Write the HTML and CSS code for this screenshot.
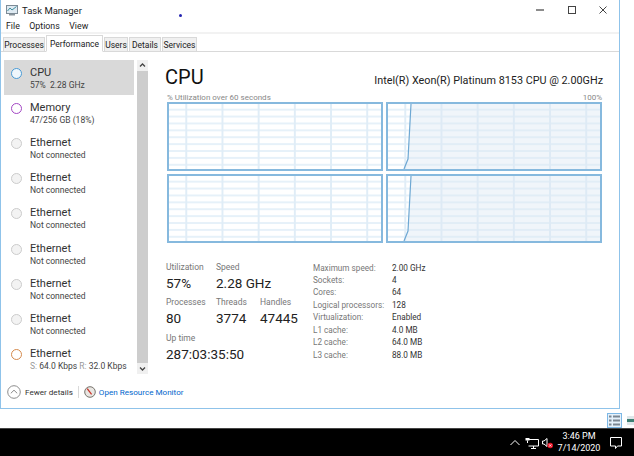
FILE: index.html
```html
<!DOCTYPE html>
<html lang="en">
<head>
  <meta charset="UTF-8">
  <title>Task Manager</title>
  <link rel="stylesheet" href="styles.css">
</head>
<body>
  <div class="window">
    <div class="titlebar">
      <svg class="app-icon" width="12" height="12" viewBox="0 0 12 12">
        <rect x="0.5" y="1.5" width="11" height="8" fill="#dfeaf2" stroke="#7d8b96"/>
        <path d="M1.5 7 L4 4 L6 6 L10.5 2.5" fill="none" stroke="#3f8f9f"/>
        <rect x="3" y="10" width="6" height="1.5" fill="#8a949c"/>
      </svg>
      <span class="app-name">Task Manager</span>
      <span class="cursor-dot"></span>
      <div class="win-btns">
        <svg width="10" height="10" viewBox="0 0 10 10"><rect x="1" y="4" width="8" height="2" fill="#8c8c8c"/></svg>
        <svg width="10" height="10" viewBox="0 0 10 10"><rect x="1.5" y="1.5" width="7" height="7" fill="none" stroke="#444"/></svg>
        <svg width="10" height="10" viewBox="0 0 10 10"><path d="M1.5 1.5 L8.5 8.5 M8.5 1.5 L1.5 8.5" stroke="#444"/></svg>
      </div>
    </div>
    <div class="menubar">
      <span>File</span>
      <span>Options</span>
      <span>View</span>
    </div>
    <div class="tabs">
      <div class="tab tab-processes">Processes</div>
      <div class="tab tab-active">Performance</div>
      <div class="tab tab-users">Users</div>
      <div class="tab tab-details">Details</div>
      <div class="tab tab-services">Services</div>
    </div>

    <div class="content">
      <div class="sidebar">
        <div class="items">
          <div class="item selected">
            <span class="dot dot-cpu"></span>
            <div><div class="item-name">CPU</div><div class="item-sub">57%&nbsp; 2.28 GHz</div></div>
          </div>
          <div class="item">
            <span class="dot dot-mem"></span>
            <div><div class="item-name">Memory</div><div class="item-sub">47/256 GB (18%)</div></div>
          </div>
          <div class="item">
            <span class="dot dot-off"></span>
            <div><div class="item-name">Ethernet</div><div class="item-sub">Not connected</div></div>
          </div>
          <div class="item">
            <span class="dot dot-off"></span>
            <div><div class="item-name">Ethernet</div><div class="item-sub">Not connected</div></div>
          </div>
          <div class="item">
            <span class="dot dot-off"></span>
            <div><div class="item-name">Ethernet</div><div class="item-sub">Not connected</div></div>
          </div>
          <div class="item">
            <span class="dot dot-off"></span>
            <div><div class="item-name">Ethernet</div><div class="item-sub">Not connected</div></div>
          </div>
          <div class="item">
            <span class="dot dot-off"></span>
            <div><div class="item-name">Ethernet</div><div class="item-sub">Not connected</div></div>
          </div>
          <div class="item">
            <span class="dot dot-off"></span>
            <div><div class="item-name">Ethernet</div><div class="item-sub">Not connected</div></div>
          </div>
          <div class="item">
            <span class="dot dot-eth"></span>
            <div><div class="item-name">Ethernet</div><div class="item-sub"><span class="dim">S:</span> 64.0 Kbps <span class="dim">R:</span> 32.0 Kbps</div></div>
          </div>
        </div>
        <div class="scrollbar">
          <svg class="arrow" width="11" height="11" viewBox="0 0 11 11"><path d="M3 6.5 L5.5 4 L8 6.5" fill="none" stroke="#444" stroke-width="1.3"/></svg>
          <div class="thumb"></div>
          <svg class="arrow" width="11" height="11" viewBox="0 0 11 11"><path d="M3 4.5 L5.5 7 L8 4.5" fill="none" stroke="#444" stroke-width="1.3"/></svg>
        </div>
      </div>

      <div class="main">
        <div class="main-head">
          <div class="main-title">CPU</div>
          <div class="cpu-model">Intel(R) Xeon(R) Platinum 8153 CPU @ 2.00GHz</div>
        </div>
        <div class="graph-label">
          <span>% Utilization over 60 seconds</span>
          <span>100%</span>
        </div>
        <div class="graphs">
          <div class="graph"></div>
          <div class="graph">
            <svg class="plot" viewBox="0 0 212 65" preserveAspectRatio="none">
              <path d="M16 65 L20 55 L23 0 L212 0 L212 65 Z" fill="#dbe6f3" fill-opacity="0.42"/>
              <path d="M16 65 L20 55 L23 0" fill="none" stroke="#6ea8d3" stroke-width="1.2"/>
            </svg>
          </div>
          <div class="graph"></div>
          <div class="graph">
            <svg class="plot" viewBox="0 0 212 65" preserveAspectRatio="none">
              <path d="M16 65 L20 55 L23 0 L212 0 L212 65 Z" fill="#dbe6f3" fill-opacity="0.42"/>
              <path d="M16 65 L20 55 L23 0" fill="none" stroke="#6ea8d3" stroke-width="1.2"/>
            </svg>
          </div>
        </div>

        <div class="stats">
          <div class="stats-left">
            <div class="stat-row">
              <div class="stat stat-a"><div class="stat-label">Utilization</div><div class="stat-value">57%</div></div>
              <div class="stat"><div class="stat-label">Speed</div><div class="stat-value">2.28 GHz</div></div>
            </div>
            <div class="stat-row">
              <div class="stat stat-a"><div class="stat-label">Processes</div><div class="stat-value">80</div></div>
              <div class="stat stat-b"><div class="stat-label">Threads</div><div class="stat-value">3774</div></div>
              <div class="stat"><div class="stat-label">Handles</div><div class="stat-value">47445</div></div>
            </div>
            <div class="stat-row">
              <div class="stat"><div class="stat-label">Up time</div><div class="stat-value">287:03:35:50</div></div>
            </div>
          </div>
          <div class="specs">
            <span class="spec-key">Maximum speed:</span><span>2.00 GHz</span>
            <span class="spec-key">Sockets:</span><span>4</span>
            <span class="spec-key">Cores:</span><span>64</span>
            <span class="spec-key">Logical processors:</span><span>128</span>
            <span class="spec-key">Virtualization:</span><span>Enabled</span>
            <span class="spec-key">L1 cache:</span><span>4.0 MB</span>
            <span class="spec-key">L2 cache:</span><span>64.0 MB</span>
            <span class="spec-key">L3 cache:</span><span>88.0 MB</span>
          </div>
        </div>
      </div>
    </div>

    <div class="footer">
      <svg width="14" height="14" viewBox="0 0 14 14">
        <circle cx="7" cy="7" r="6.3" fill="none" stroke="#8c8c8c"/>
        <path d="M3.8 8.3 L7 5.2 L10.2 8.3" fill="none" stroke="#8c8c8c"/>
      </svg>
      <span class="fewer">Fewer details</span>
      <span class="footer-sep"></span>
      <svg width="12" height="12" viewBox="0 0 12 12">
        <circle cx="6" cy="6" r="5.3" fill="#e8e6e2" stroke="#77736c"/>
        <path d="M3.2 2.6 L7.6 8.4" stroke="#c9352b" stroke-width="1.3"/>
      </svg>
      <span class="link">Open Resource Monitor</span>
    </div>
  </div>

  <div class="strip">
    <span class="view-btn view-on">
      <svg width="13" height="13" viewBox="0 0 13 13">
        <path d="M1 2.5 H3.5 M5 2.5 H12 M1 6.5 H3.5 M5 6.5 H12 M1 10.5 H3.5 M5 10.5 H12" stroke="#7b8793" stroke-width="2"/>
      </svg>
    </span>
    <span class="view-btn">
      <svg width="13" height="13" viewBox="0 0 13 13">
        <rect x="1" y="2" width="11" height="9" fill="#dfe6ea"/>
        <rect x="1" y="5" width="7" height="3" fill="#3d7f73"/>
      </svg>
    </span>
  </div>

  <div class="taskbar">
    <svg width="12" height="12" viewBox="0 0 12 12"><path d="M1.5 8 L6 3.5 L10.5 8" fill="none" stroke="#fff"/></svg>
    <svg class="tray-net" width="14" height="14" viewBox="0 0 14 14">
      <path d="M3.5 3.5 H13.5 V10 H3.5 M8.5 10 V12.5 M6 12.5 H11" fill="none" stroke="#fff"/>
      <rect x="0.5" y="2" width="4" height="2.5" fill="#fff"/>
      <path d="M2.5 4.5 V7" stroke="#fff"/>
    </svg>
    <span class="tray-sound">
      <svg width="13" height="14" viewBox="0 0 13 14">
        <path d="M2.5 5 H4 L7 2.5 V10.5 L4 8 H2.5 Z" fill="none" stroke="#fff"/>
        <circle cx="10.2" cy="9.5" r="2.8" fill="#e81123"/>
        <path d="M9 8.3 L11.4 10.7 M11.4 8.3 L9 10.7" stroke="#fff" stroke-width="0.8"/>
      </svg>
    </span>
    <div class="clock">
      <div>3:46 PM</div>
      <div>7/14/2020</div>
    </div>
    <svg class="notify" width="14" height="14" viewBox="0 0 14 14">
      <path d="M1.5 1.5 H12.5 V10 H8.5 L6.5 12.5 V10 H1.5 Z" fill="none" stroke="#fff"/>
    </svg>
  </div>
</body>
</html>
```

FILE: styles.css
```css
* {
  box-sizing: border-box;
}
html, body {
  margin: 0;
  padding: 0;
}
body {
  width: 634px;
  height: 456px;
  overflow: hidden;
  background: #fff;
  font-family: Roboto, "Noto Sans", sans-serif;
  color: #222;
  display: flex;
  flex-direction: column;
}

/* window frame */
.window {
  width: 620px;
  height: 409px;
  flex: none;
  border-left: 1px solid #8fc3ea;
  border-right: 1px solid #8fc3ea;
  border-bottom: 1px solid #8fc3ea;
  display: flex;
  flex-direction: column;
  position: relative;
}
.titlebar {
  height: 20px;
  display: flex;
  align-items: center;
  padding-left: 5px;
  font-size: 9.5px;
}
.app-icon {
  margin-right: 4px;
}
.cursor-dot {
  position: absolute;
  left: 178px;
  top: 14px;
  width: 3px;
  height: 3px;
  border-radius: 50%;
  background: #2323b0;
}
.win-btns {
  margin-left: auto;
  display: flex;
  gap: 21.5px;
  padding-right: 11px;
}
.menubar {
  height: 14px;
  display: flex;
  align-items: center;
  gap: 9.5px;
  padding-left: 5px;
  font-size: 8.8px;
  border-bottom: 2px solid #f2f2f2;
}
.tabs {
  height: 18px;
  display: flex;
  align-items: flex-end;
  padding-left: 2px;
  border-bottom: 1px solid #d9d9d9;
  font-size: 8.5px;
}
.tab {
  height: 15px;
  margin-bottom: -1px;
  background: #f0f0f0;
  border: 1px solid #d9d9d9;
  margin-right: 1px;
  display: flex;
  align-items: center;
  justify-content: center;
}
.tab-processes { width: 42px; }
.tab-active {
  width: 57px;
  height: 17px;
  background: #fff;
  border-bottom-color: #fff;
}
.tab-users { width: 24px; }
.tab-details { width: 32px; }
.tab-services { width: 35px; }

.content {
  flex: 1;
  display: flex;
  min-height: 0;
}

/* left list */
.sidebar {
  width: 147px;
  flex: none;
  display: flex;
  padding: 8px 0 0 3px;
}
.items {
  width: 130px;
}
.item {
  height: 35.2px;
  display: flex;
  align-items: center;
  gap: 8px;
  padding: 0 0 0 7px;
}
.selected {
  background: #d9d9d9;
}
.dot {
  width: 11px;
  height: 11px;
  flex: none;
  border-radius: 50%;
  border: 1.3px solid #ccc;
  background: #f3f3f3;
  margin-top: -9px;
}
.dot-cpu { border-color: #4a9ad4; background: #eef6fc; }
.dot-mem { border-color: #a346c4; background: #fff; }
.dot-eth { border-color: #d58a4c; background: #fff; }
.item-name {
  font-size: 11px;
  line-height: 14px;
  color: #333;
}
.item-sub {
  font-size: 8.5px;
  line-height: 10px;
  color: #444;
}
.dim {
  color: #999;
}
.scrollbar {
  width: 11px;
  margin-left: 3px;
  height: 314px;
  background: #f0f0f0;
  display: flex;
  flex-direction: column;
}
.thumb {
  flex: 1;
  background: #cdcdcd;
}
.arrow {
  flex: none;
}

/* right side */
.main {
  flex: 1;
  padding: 12px 17px 0 19px;
}
.main-head {
  display: flex;
  justify-content: space-between;
  align-items: flex-end;
  height: 26px;
}
.main-title {
  font-size: 20px;
  line-height: 26px;
  color: #111;
  margin-left: -2px;
}
.cpu-model {
  font-size: 10.8px;
  line-height: 19px;
  color: #222;
  margin-right: -1px;
}
.graph-label {
  display: flex;
  justify-content: space-between;
  font-size: 8px;
  line-height: 10px;
  color: #888;
  margin-top: 3px;
  height: 9px;
}
.graphs {
  display: grid;
  grid-template-columns: 216px 216px;
  grid-template-rows: 69px 69px;
  gap: 3px;
}
.graph {
  border: 2px solid #86b9de;
  position: relative;
  background-color: #fff;
  background-image:
    linear-gradient(to right, #e0edf7 1.5px, transparent 1.5px),
    linear-gradient(to bottom, #e6f1f9 1.5px, transparent 1.5px);
  background-size: 36.2px 100%, 100% 6.9px;
  background-position: 16.3px 0, 0 4.7px;
}
.plot {
  display: block;
  width: 100%;
  height: 100%;
}

.stats {
  display: flex;
  margin: 18.5px 0 0 -1px;
}
.stats-left {
  width: 147px;
  flex: none;
}
.stat-row {
  display: flex;
  height: 35.5px;
}
.stat-a {
  width: 50px;
}
.stat-b {
  width: 44px;
}
.stat-label {
  font-size: 8.5px;
  line-height: 11px;
  color: #777;
}
.stat-value {
  font-size: 13.5px;
  line-height: 20px;
  color: #222;
}
.specs {
  display: grid;
  grid-template-columns: 79px auto;
  grid-auto-rows: 12.45px;
  font-size: 8.2px;
  line-height: 12.45px;
  align-items: center;
  color: #333;
}
.spec-key {
  color: #777;
}

/* bottom bar of the window */
.footer {
  height: 34px;
  flex: none;
  display: flex;
  align-items: center;
  padding: 2px 0 0 6px;
  font-size: 8.1px;
}
.fewer {
  margin-left: 4px;
  color: #333;
}
.footer-sep {
  width: 1px;
  height: 12px;
  background: #d9d9d9;
  margin: 0 5px;
}
.link {
  margin-left: 3px;
  color: #0066cc;
}

.strip {
  height: 19px;
  flex: none;
  display: flex;
  justify-content: flex-end;
  align-items: flex-end;
  gap: 3px;
  margin-right: -6px;
}
.view-btn {
  width: 15px;
  height: 15px;
  display: flex;
  align-items: center;
  justify-content: center;
}
.view-on {
  background: #e5f1fb;
  border: 1px solid #7db8e6;
}

.taskbar {
  flex: 1;
  background: #000;
  border-top: 1px solid #444;
  color: #fff;
  display: flex;
  align-items: center;
  justify-content: flex-end;
}
.tray-net {
  margin-left: 3.5px;
}
.tray-sound {
  display: flex;
  margin-left: 1.5px;
}
.clock {
  width: 52px;
  text-align: center;
  font-size: 9px;
  line-height: 12px;
  margin-top: -2px;
}
.notify {
  margin-right: 11px;
  margin-left: 4px;
}
```
